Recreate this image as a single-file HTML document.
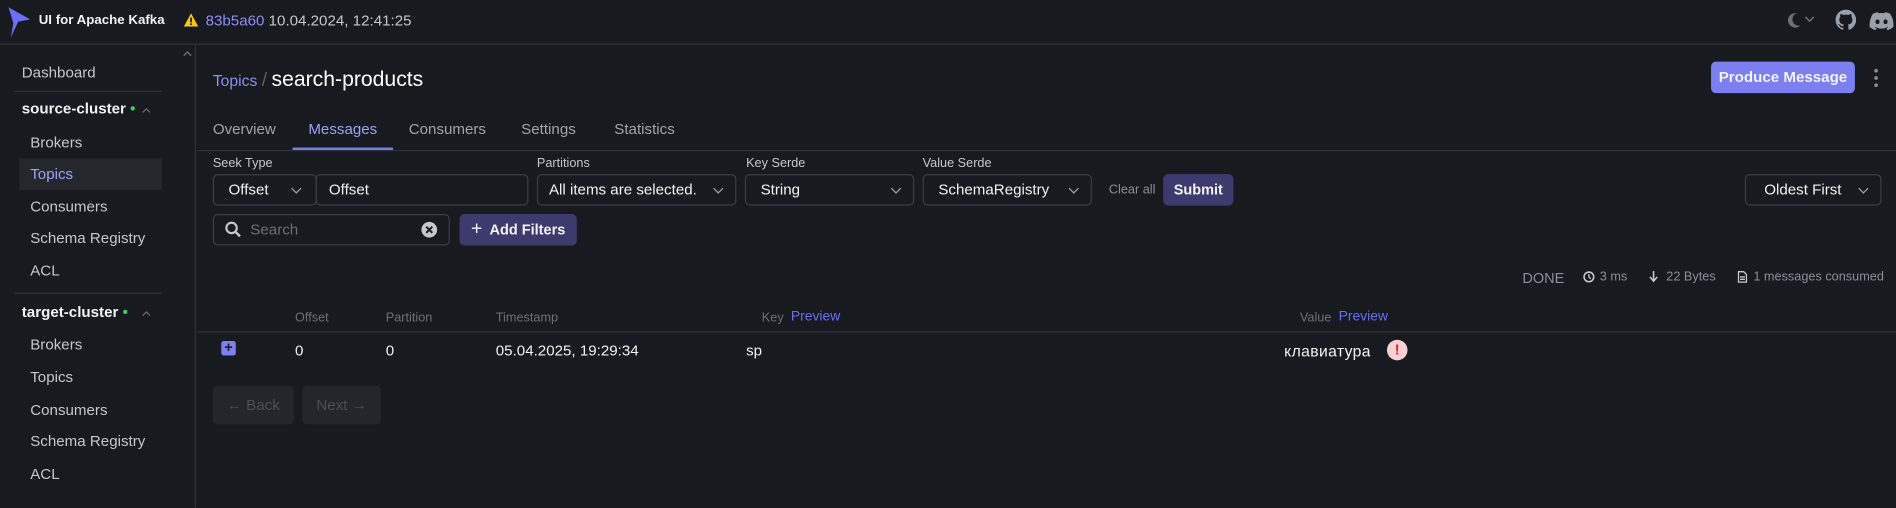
<!DOCTYPE html>
<html><head><meta charset="utf-8"><style>
*{box-sizing:border-box;margin:0;padding:0}
html,body{width:1896px;height:508px;overflow:hidden;background:#171a1e}
#w{width:1568px;height:420px;transform:scale(1.2092);transform-origin:0 0;position:relative;font-family:"Liberation Sans","Noto Sans CJK SC",sans-serif;color:#f1f2f3;background:#171a1e}
.a{position:absolute;white-space:nowrap}
.hd{left:0;top:0;width:1568px;height:37px;border-bottom:1px solid #2f3338}
.sb{left:0;top:37px;width:162px;height:383px;border-right:1px solid #2f3338}
.si{font-size:12.5px;color:#c4c8ce}
.bx{border:1px solid #3a3f45;border-radius:4px;height:26px;font-size:12.5px;display:flex;align-items:center;padding-left:12px}
.lb{font-size:10.5px;color:#c4c8ce}
.g{color:#8a8f98;font-size:10.5px}
.chev{position:absolute;right:11px;top:8px;width:6px;height:6px;border-right:1.2px solid #a0a5ad;border-bottom:1.2px solid #a0a5ad;transform:rotate(45deg)}
</style></head><body><div id="w">
<div class="a hd"></div>
<svg class="a" style="left:5px;top:6px" width="22" height="26" viewBox="0 0 22 26"><path d="M2 0 L20 10 L10 12 L4 25 L6 13 Z" fill="#6c6ff5"/></svg>
<div class="a" style="left:32px;top:11px;font-size:11px;font-weight:bold">UI for Apache Kafka</div>
<svg class="a" style="left:152px;top:11px" width="12" height="11" viewBox="0 0 12 11"><path d="M6 0 L12 11 L0 11Z" fill="#f5c518"/><rect x="5.3" y="3.5" width="1.4" height="4" fill="#171a1e"/><rect x="5.3" y="8.3" width="1.4" height="1.4" fill="#171a1e"/></svg>
<div class="a" style="left:170px;top:10px;font-size:12.5px"><span style="color:#8b8ff7">83b5a60</span> <span style="color:#c4c8ce">10.04.2024, 12:41:25</span></div>
<svg class="a" style="left:1478px;top:10px" width="12" height="14" viewBox="0 0 12 14"><path d="M8 1 A6 6 0 1 0 11 11 A5 5 0 0 1 8 1Z" fill="#6b7078"/></svg>
<svg class="a" style="left:1492px;top:13px" width="9" height="6"><path d="M1 1 L4.5 4.5 L8 1" stroke="#6b7078" fill="none" stroke-width="1.3"/></svg>
<svg class="a" style="left:1518px;top:8px" width="17" height="17" viewBox="0 0 16 16"><path fill="#9aa0a8" d="M8 0C3.58 0 0 3.58 0 8c0 3.54 2.290 6.53 5.47 7.59.4.07.55-.17.55-.38v-1.34c-2.23.48-2.7-1.07-2.7-1.07-.36-.92-.89-1.170-.89-1.17-.73-.5.06-.49.06-.49.8.06 1.23.83 1.23.83.71 1.22 1.87.87 2.33.66.07-.52.28-.87.5-1.07-1.78-.2-3.64-.89-3.64-3.95 0-.87.31-1.59.82-2.15-.08-.2-.36-1.02.08-2.12 0 0 .67-.21 2.2.82a7.6 7.6 0 014 0c1.53-1.04 2.2-.82 2.2-.82.44 1.1.16 1.92.08 2.12.51.56.82 1.27.82 2.150 0 3.07-1.87 3.75-3.65 3.95.29.25.54.73.54 1.48v2.2c0 .21.15.46.55.38A8 8 0 0016 8c0-4.42-3.58-8-8-8z"/></svg>
<svg class="a" style="left:1546px;top:10px" width="20" height="15" viewBox="0 0 20 15"><path fill="#9aa0a8" d="M17 1.3A16 16 0 0013 0l-.5 1a15 15 0 00-5 0L7 0a16 16 0 00-4 1.3C.5 5 0 8.7.2 12.3A16 16 0 005 15l1-1.6a10 10 0 01-1.6-.8l.4-.3a11 11 0 0010.4 0l.4.3a10 10 0 01-1.6.8l1 1.6a16 16 0 004.8-2.7c.3-4.2-.5-7.8-2.8-11zM6.7 10c-1 0-1.7-.9-1.7-2s.8-2 1.7-2 1.8.9 1.7 2c0 1.1-.8 2-1.7 2zm6.6 0c-1 0-1.7-.9-1.7-2s.8-2 1.7-2 1.8.9 1.7 2c0 1.1-.7 2-1.7 2z"/></svg>
<div class="a sb"></div>
<svg class="a" style="left:151px;top:41px" width="8" height="6"><path d="M1 5 L4 2 L7 5" stroke="#6b7078" fill="none" stroke-width="1.2"/></svg>
<div class="a si" style="left:18px;top:53px">Dashboard</div>
<div class="a" style="left:12px;top:75px;width:122px;height:1px;background:#2f3338"></div>
<div class="a" style="left:18px;top:83px;font-size:12.5px;font-weight:bold">source-cluster <span style="color:#3ecf6e">•</span></div>
<svg class="a" style="left:117px;top:88px" width="8" height="6"><path d="M1 5 L4 2 L7 5" stroke="#6b7078" fill="none" stroke-width="1"/></svg>
<div class="a si" style="left:25px;top:111px">Brokers</div>
<div class="a" style="left:16px;top:131px;width:118px;height:26px;background:#24282d"></div>
<div class="a si" style="left:25px;top:137px;color:#9ea1f8">Topics</div>
<div class="a si" style="left:25px;top:164px">Consumers</div>
<div class="a si" style="left:25px;top:190px">Schema Registry</div>
<div class="a si" style="left:25px;top:217px">ACL</div>
<div class="a" style="left:12px;top:242px;width:122px;height:1px;background:#2f3338"></div>
<div class="a" style="left:18px;top:251px;font-size:12.5px;font-weight:bold">target-cluster <span style="color:#3ecf6e">•</span></div>
<svg class="a" style="left:117px;top:256px" width="8" height="6"><path d="M1 5 L4 2 L7 5" stroke="#6b7078" fill="none" stroke-width="1"/></svg>
<div class="a si" style="left:25px;top:278px">Brokers</div>
<div class="a si" style="left:25px;top:305px">Topics</div>
<div class="a si" style="left:25px;top:332px">Consumers</div>
<div class="a si" style="left:25px;top:358px">Schema Registry</div>
<div class="a si" style="left:25px;top:385px">ACL</div>
<div class="a" style="left:176px;top:55px;font-size:13px;color:#8b8ff7">Topics <span style="color:#5a5f66;font-size:16px">/</span> <span style="color:#fff;font-size:17.5px">search-products</span></div>
<div class="a" style="left:1415px;top:51px;width:119px;height:26px;background:#7b7ff0;border-radius:4px;font-size:12.5px;font-weight:bold;display:flex;align-items:center;justify-content:center">Produce Message</div>
<div class="a" style="left:1550px;top:57px;width:3px;height:3px;border-radius:2px;background:#8a8f98;box-shadow:0 6px #8a8f98,0 12px #8a8f98"></div>
<div class="a" style="left:176px;top:100px;font-size:12.5px;color:#a0a5ad">Overview</div>
<div class="a" style="left:255px;top:100px;font-size:12.5px;color:#9ea1f8">Messages</div>
<div class="a" style="left:338px;top:100px;font-size:12.5px;color:#a0a5ad">Consumers</div>
<div class="a" style="left:431px;top:100px;font-size:12.5px;color:#a0a5ad">Settings</div>
<div class="a" style="left:508px;top:100px;font-size:12.5px;color:#a0a5ad">Statistics</div>
<div class="a" style="left:163px;top:124px;width:1405px;height:1px;background:#2f3338"></div>
<div class="a" style="left:242px;top:122px;width:83px;height:2px;background:#7b7ff0"></div>
<div class="a lb" style="left:176px;top:129px">Seek Type</div>
<div class="a lb" style="left:444px;top:129px">Partitions</div>
<div class="a lb" style="left:617px;top:129px">Key Serde</div>
<div class="a lb" style="left:763px;top:129px">Value Serde</div>
<div class="a bx" style="left:176px;top:144px;width:86px">Offset<span class="chev" style="right:13px"></span></div>
<div class="a bx" style="left:261px;top:144px;width:176px;padding-left:10px">Offset</div>
<div class="a bx" style="left:444px;top:144px;width:165px;padding-left:9px">All items are selected.<span class="chev"></span></div>
<div class="a bx" style="left:616px;top:144px;width:140px">String<span class="chev"></span></div>
<div class="a bx" style="left:763px;top:144px;width:140px">SchemaRegistry<span class="chev"></span></div>
<div class="a" style="left:917px;top:151px;font-size:10.5px;color:#8a8f98">Clear all</div>
<div class="a" style="left:962px;top:144px;width:58px;height:26px;background:#3d3b6e;border-radius:4px;font-size:12px;font-weight:bold;display:flex;align-items:center;justify-content:center">Submit</div>
<div class="a bx" style="left:1443px;top:144px;width:113px;padding-left:15px">Oldest First<span class="chev"></span></div>
<div class="a bx" style="left:176px;top:177px;width:196px;padding-left:30px;color:#6b7078">Search</div>
<svg class="a" style="left:186px;top:183px" width="14" height="14"><circle cx="5.5" cy="5.5" r="4.3" stroke="#c4c8ce" stroke-width="1.8" fill="none"/><path d="M8.5 8.5 L12.5 12.5" stroke="#c4c8ce" stroke-width="2"/></svg>
<svg class="a" style="left:348px;top:183px" width="14" height="14"><circle cx="7" cy="7" r="6.5" fill="#c4c8ce"/><path d="M4.5 4.5 L9.5 9.5 M9.5 4.5 L4.5 9.5" stroke="#171a1e" stroke-width="1.6"/></svg>
<div class="a" style="left:380px;top:177px;width:97px;height:26px;background:#3d3b6e;border-radius:4px;font-size:12px;font-weight:bold;display:flex;align-items:center;justify-content:center"><span style="font-size:16px;font-weight:normal;margin-right:6px">+</span>Add Filters</div>
<div class="a" style="left:1259px;top:223px;font-size:12px;color:#8a8f98">DONE</div>
<svg class="a" style="left:1309px;top:224px" width="10" height="10"><circle cx="5" cy="5" r="4" stroke="#c4c8ce" stroke-width="1.3" fill="none"/><path d="M5 2.5 V5 L6.5 6.5" stroke="#c4c8ce" stroke-width="1.1" fill="none"/></svg>
<div class="a g" style="left:1323px;top:223px">3 ms</div>
<svg class="a" style="left:1363px;top:224px" width="9" height="10"><path d="M4.5 0 V8 M1.5 5 L4.5 8.5 L7.5 5" stroke="#c4c8ce" stroke-width="1.3" fill="none"/></svg>
<div class="a g" style="left:1378px;top:223px">22 Bytes</div>
<svg class="a" style="left:1437px;top:224px" width="8" height="10"><path d="M0.7 0.7 H5 L7.3 3 V9.3 H0.7 Z M2 5 H6 M2 7 H6" stroke="#c4c8ce" stroke-width="1.1" fill="none"/></svg>
<div class="a g" style="left:1450px;top:223px">1 messages consumed</div>
<div class="a g" style="left:244px;top:257px;color:#6b7078">Offset</div>
<div class="a g" style="left:319px;top:257px;color:#6b7078">Partition</div>
<div class="a g" style="left:410px;top:257px;color:#6b7078">Timestamp</div>
<div class="a g" style="left:630px;top:257px;color:#6b7078">Key</div>
<div class="a" style="left:654px;top:256px;color:#6a6ef5;font-size:11.5px">Preview</div>
<div class="a g" style="left:1075px;top:257px;color:#6b7078">Value</div>
<div class="a" style="left:1107px;top:256px;color:#6a6ef5;font-size:11.5px">Preview</div>
<div class="a" style="left:163px;top:274px;width:1405px;height:1px;background:#2f3338"></div>
<div class="a" style="left:183px;top:282px;width:12px;height:12px;background:#7b7ff0;border-radius:2px;color:#171a1e;font-size:12px;font-weight:bold;line-height:11px;text-align:center">+</div>
<div class="a" style="left:244px;top:283px;font-size:12.5px">0</div>
<div class="a" style="left:319px;top:283px;font-size:12.5px">0</div>
<div class="a" style="left:410px;top:283px;font-size:12.5px">05.04.2025, 19:29:34</div>
<div class="a" style="left:617px;top:283px;font-size:12.5px">sp</div>
<div class="a" style="left:1062px;top:283px;font-size:13px;letter-spacing:0.3px">клавиатура</div>
<div class="a" style="left:1147px;top:281px;width:17px;height:17px;border-radius:50%;background:#f8cfd2;color:#e0242f;font-size:12px;font-weight:bold;text-align:center;line-height:17px">!</div>
<div class="a" style="left:176px;top:319px;width:67px;height:32px;background:#23272c;border-radius:4px;color:#4a4f55;font-size:12.5px;display:flex;align-items:center;justify-content:center">← Back</div>
<div class="a" style="left:250px;top:319px;width:65px;height:32px;background:#23272c;border-radius:4px;color:#4a4f55;font-size:12.5px;display:flex;align-items:center;justify-content:center">Next →</div>
</div></body></html>
